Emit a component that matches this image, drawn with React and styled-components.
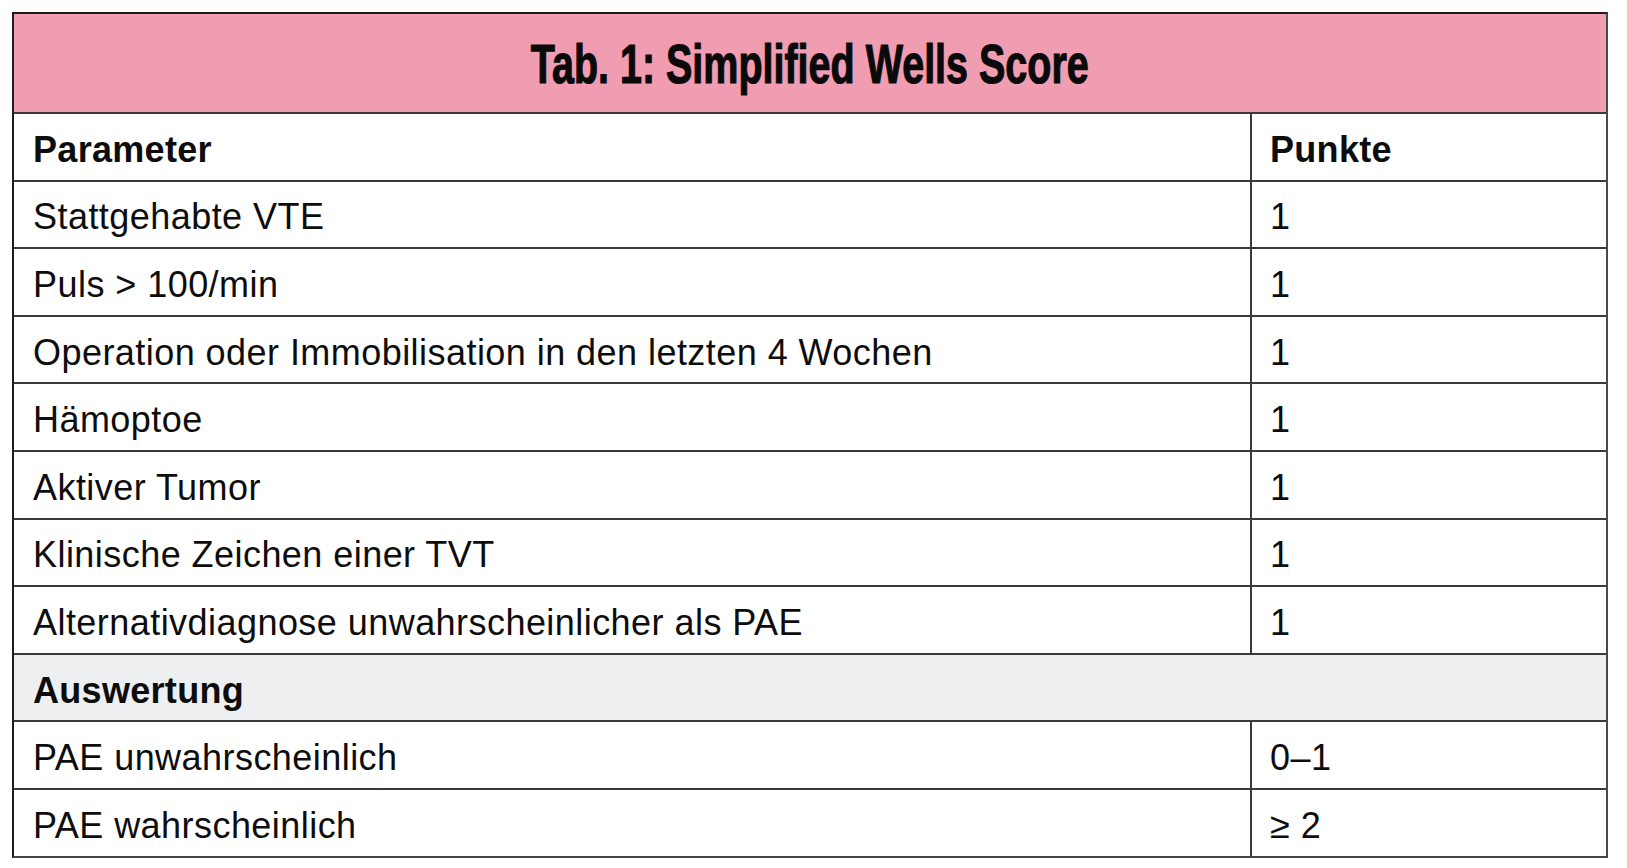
import React from "react";
import styled, { createGlobalStyle } from "styled-components";

const Global = createGlobalStyle`
  html, body { margin: 0; padding: 0; background: #ffffff; }
  body { font-family: "Liberation Sans", Arial, sans-serif; color: #111; }
`;

const Page = styled.div`
  padding: 12px 19px 12px 12px;
`;

const Table = styled.div`
  width: 1596px;
  box-sizing: border-box;
  border: 2px solid #1c1c1c;
  border-right-color: #4a4a4a;
  border-bottom-color: #444;
  display: flex;
  flex-direction: column;
`;

const TitleBar = styled.div`
  height: 98px;
  background: #f19db1;
  display: flex;
  align-items: center;
  justify-content: center;
`;

const Title = styled.h1`
  margin: 0;
  display: inline-block;
  font-family: "Liberation Sans", Arial, sans-serif;
  font-weight: 700;
  font-size: 56px;
  line-height: 1;
  color: #0a0a0a;
  transform: scaleX(0.705);
  -webkit-text-stroke: 1.2px #0a0a0a;
  white-space: nowrap;
  padding-top: 2px;
`;

const Row = styled.div`
  display: grid;
  grid-template-columns: ${(p) => (p.$span ? "1fr" : "1236px 1fr")};
  height: 67.6px;
  box-sizing: border-box;
  border-top: 2px solid #3a3a3a;
  background: ${(p) => (p.$shade ? "#eeeff1" : "#ffffff")};
`;

const Cell = styled.div`
  display: flex;
  align-items: center;
  padding: 6px 0 0 19px;
  font-size: 36px;
  font-weight: ${(p) => (p.$bold ? 700 : 400)};
  letter-spacing: ${(p) => (p.$bold ? "0.3px" : "0.45px")};
  color: #0d0d0d;
  white-space: nowrap;
  & + & {
    border-left: 2px solid #3a3a3a;
    padding-left: 18px;
  }
`;

const rows = [
  ["Stattgehabte VTE", "1"],
  ["Puls > 100/min", "1"],
  ["Operation oder Immobilisation in den letzten 4 Wochen", "1"],
  ["Hämoptoe", "1"],
  ["Aktiver Tumor", "1"],
  ["Klinische Zeichen einer TVT", "1"],
  ["Alternativdiagnose unwahrscheinlicher als PAE", "1"],
];

const evaluation = [
  ["PAE unwahrscheinlich", "0–1"],
  ["PAE wahrscheinlich", "≥ 2"],
];

export default function App() {
  return (
    <>
      <Global />
      <Page>
        <Table>
          <TitleBar>
            <Title>Tab. 1: Simplified Wells Score</Title>
          </TitleBar>
          <Row>
            <Cell $bold>Parameter</Cell>
            <Cell $bold>Punkte</Cell>
          </Row>
          {rows.map(([a, b]) => (
            <Row key={a}>
              <Cell>{a}</Cell>
              <Cell>{b}</Cell>
            </Row>
          ))}
          <Row $span $shade>
            <Cell $bold>Auswertung</Cell>
          </Row>
          {evaluation.map(([a, b]) => (
            <Row key={a}>
              <Cell>{a}</Cell>
              <Cell>{b}</Cell>
            </Row>
          ))}
        </Table>
      </Page>
    </>
  );
}
